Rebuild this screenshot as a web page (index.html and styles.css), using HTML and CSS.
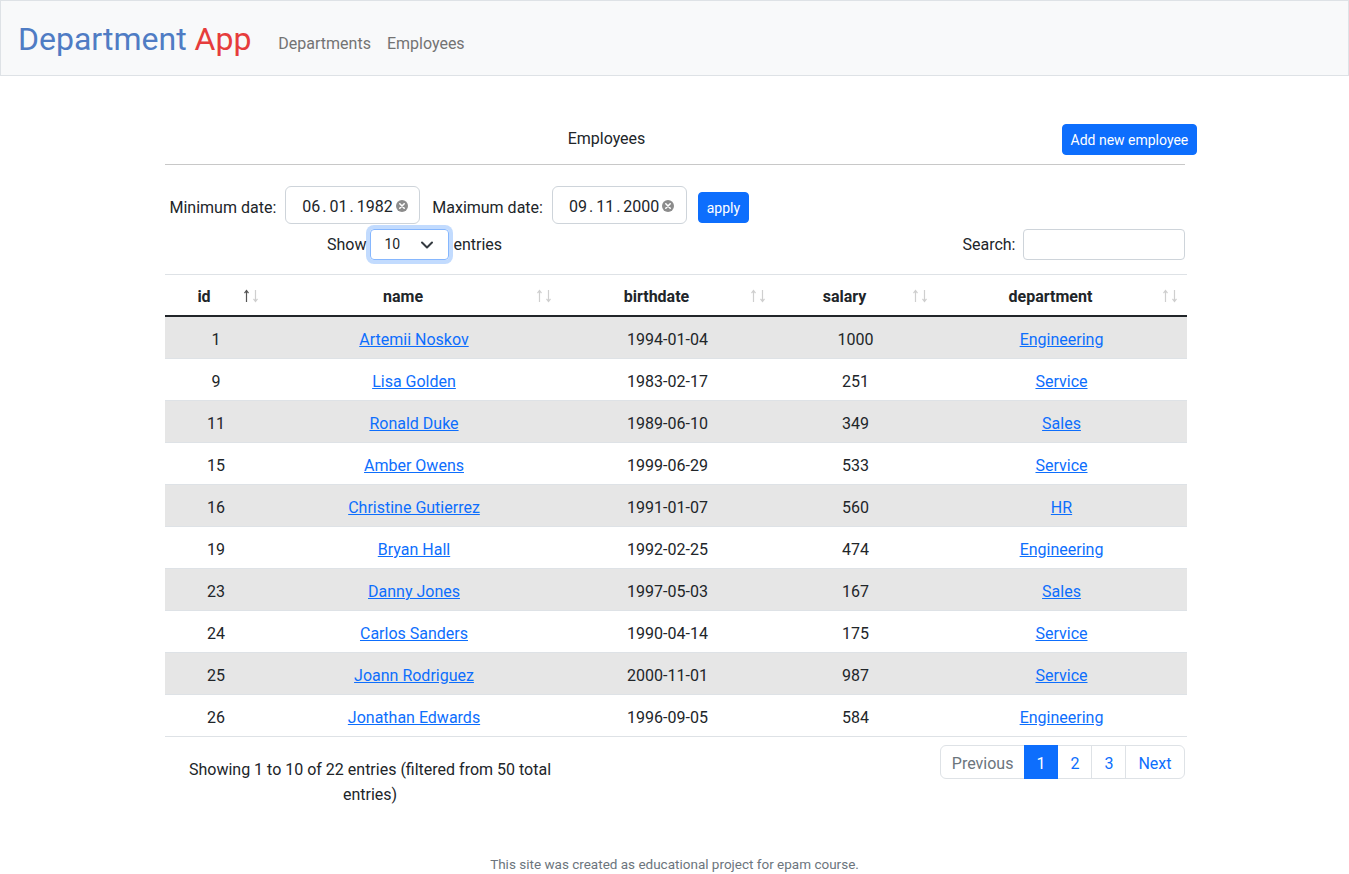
FILE: index.html
```html
<!DOCTYPE html>
<html lang="en">
<head>
<meta charset="utf-8">
<title>Department App</title>
<link rel="stylesheet" href="styles.css">
</head>
<body>
<nav class="navbar">
  <a class="brand" href="#"><span class="brand-blue">Department</span> <span class="brand-red">App</span></a>
  <a class="nav-link" href="#">Departments</a>
  <a class="nav-link" href="#">Employees</a>
</nav>

<main class="container">
  <div class="title-row">
    <h1 class="title">Employees</h1>
    <button class="btn btn-sm btn-add">Add new employee</button>
  </div>
  <hr class="sep">

  <div class="filters">
    <span class="flabel">Minimum date:</span>
    <div class="date-input">
      <span class="date-text">06<span class="dot">.</span>01<span class="dot">.</span>1982</span>
      <svg class="clear" width="12" height="12" viewBox="0 0 12 12"><circle cx="6" cy="6" r="6" fill="#8c8c8c"/><path d="M3.8 3.8L8.2 8.2M8.2 3.8L3.8 8.2" stroke="#fff" stroke-width="1.6" stroke-linecap="round"/></svg>
    </div>
    <span class="flabel flabel-2">Maximum date:</span>
    <div class="date-input">
      <span class="date-text">09<span class="dot">.</span>11<span class="dot">.</span>2000</span>
      <svg class="clear" width="12" height="12" viewBox="0 0 12 12"><circle cx="6" cy="6" r="6" fill="#8c8c8c"/><path d="M3.8 3.8L8.2 8.2M8.2 3.8L3.8 8.2" stroke="#fff" stroke-width="1.6" stroke-linecap="round"/></svg>
    </div>
    <button class="btn btn-sm btn-apply">apply</button>
  </div>

  <div class="dt-top">
    <div class="dt-length">
      <span class="ctl-text">Show</span>
      <div class="select-box">
        <span>10</span>
        <svg width="14" height="10" viewBox="0 0 14 10"><path d="M2 2.5L7 7.5L12 2.5" fill="none" stroke="#343a40" stroke-width="2" stroke-linecap="round" stroke-linejoin="round"/></svg>
      </div>
      <span class="ctl-text">entries</span>
    </div>
    <div class="dt-filter">
      <span class="ctl-text">Search:</span>
      <div class="search-box"></div>
    </div>
  </div>

  <table class="dt-table">
    <colgroup>
      <col class="c-id"><col class="c-name"><col class="c-birth"><col class="c-salary"><col class="c-dept">
    </colgroup>
    <thead>
      <tr>
        <th><div class="th-in"><span class="th-label th-id">id</span><svg class="sort" width="15" height="14" viewBox="0 0 15 14"><path class="up active" d="M2.5 13V1.5M0.5 4.2L2.5 1.5L4.5 4.2"/><path class="down" d="M11.5 1V12.5M9.5 9.8L11.5 12.5L13.5 9.8"/></svg></div></th>
        <th><div class="th-in"><span class="th-label">name</span><svg class="sort" width="15" height="14" viewBox="0 0 15 14"><path class="up" d="M2.5 13V1.5M0.5 4.2L2.5 1.5L4.5 4.2"/><path class="down" d="M11.5 1V12.5M9.5 9.8L11.5 12.5L13.5 9.8"/></svg></div></th>
        <th><div class="th-in"><span class="th-label">birthdate</span><svg class="sort" width="15" height="14" viewBox="0 0 15 14"><path class="up" d="M2.5 13V1.5M0.5 4.2L2.5 1.5L4.5 4.2"/><path class="down" d="M11.5 1V12.5M9.5 9.8L11.5 12.5L13.5 9.8"/></svg></div></th>
        <th><div class="th-in"><span class="th-label">salary</span><svg class="sort" width="15" height="14" viewBox="0 0 15 14"><path class="up" d="M2.5 13V1.5M0.5 4.2L2.5 1.5L4.5 4.2"/><path class="down" d="M11.5 1V12.5M9.5 9.8L11.5 12.5L13.5 9.8"/></svg></div></th>
        <th><div class="th-in"><span class="th-label">department</span><svg class="sort" width="15" height="14" viewBox="0 0 15 14"><path class="up" d="M2.5 13V1.5M0.5 4.2L2.5 1.5L4.5 4.2"/><path class="down" d="M11.5 1V12.5M9.5 9.8L11.5 12.5L13.5 9.8"/></svg></div></th>
      </tr>
    </thead>
    <tbody>
      <tr><td>1</td><td><a href="#">Artemii Noskov</a></td><td>1994-01-04</td><td>1000</td><td><a href="#">Engineering</a></td></tr>
      <tr><td>9</td><td><a href="#">Lisa Golden</a></td><td>1983-02-17</td><td>251</td><td><a href="#">Service</a></td></tr>
      <tr><td>11</td><td><a href="#">Ronald Duke</a></td><td>1989-06-10</td><td>349</td><td><a href="#">Sales</a></td></tr>
      <tr><td>15</td><td><a href="#">Amber Owens</a></td><td>1999-06-29</td><td>533</td><td><a href="#">Service</a></td></tr>
      <tr><td>16</td><td><a href="#">Christine Gutierrez</a></td><td>1991-01-07</td><td>560</td><td><a href="#">HR</a></td></tr>
      <tr><td>19</td><td><a href="#">Bryan Hall</a></td><td>1992-02-25</td><td>474</td><td><a href="#">Engineering</a></td></tr>
      <tr><td>23</td><td><a href="#">Danny Jones</a></td><td>1997-05-03</td><td>167</td><td><a href="#">Sales</a></td></tr>
      <tr><td>24</td><td><a href="#">Carlos Sanders</a></td><td>1990-04-14</td><td>175</td><td><a href="#">Service</a></td></tr>
      <tr><td>25</td><td><a href="#">Joann Rodriguez</a></td><td>2000-11-01</td><td>987</td><td><a href="#">Service</a></td></tr>
      <tr><td>26</td><td><a href="#">Jonathan Edwards</a></td><td>1996-09-05</td><td>584</td><td><a href="#">Engineering</a></td></tr>
    </tbody>
  </table>

  <div class="dt-bottom">
    <div class="dt-info">Showing 1 to 10 of 22 entries (filtered from 50 total entries)</div>
    <ul class="pagination">
      <li class="page disabled"><a href="#">Previous</a></li>
      <li class="page active"><a href="#">1</a></li>
      <li class="page"><a href="#">2</a></li>
      <li class="page"><a href="#">3</a></li>
      <li class="page"><a href="#">Next</a></li>
    </ul>
  </div>
</main>

<footer class="footer">This site was created as educational project for epam course.</footer>
</body>
</html>
```

FILE: styles.css
```css
* { box-sizing: border-box; }

body {
  margin: 0;
  font-family: Roboto, "Noto Sans", sans-serif;
  font-size: 16px;
  line-height: 1.5;
  color: #212529;
  background: #fff;
}

a { color: #0d6efd; }

/* navbar */
.navbar {
  display: flex;
  align-items: center;
  height: 76px;
  padding: 0 16px 0 17px;
  background: #f8f9fa;
  border: 1px solid #dee2e6;
}
.brand {
  font-size: 32px;
  line-height: 1.2;
  text-decoration: none;
  margin-right: 19px;
  margin-top: 2px;
}
.brand-blue { color: #4f7cc4; }
.brand-red { color: #e63c3c; }
.nav-link {
  color: #737373;
  text-decoration: none;
  padding: 0 8px;
  margin-top: 11px;
}

/* container */
.container {
  width: 1020px;
  margin: 0 auto;
  text-align: center;
}

.title-row {
  display: flex;
  align-items: center;
  width: 1032px;
  margin-top: 48px;
  height: 31px;
}
.title {
  width: 884px;
  margin: 0;
  font-size: 16px;
  font-weight: 400;
  line-height: 24px;
  margin-top: -1px;
}
.btn {
  font-family: inherit;
  border: 1px solid #0d6efd;
  background: #0d6efd;
  color: #fff;
  border-radius: 4px;
  cursor: pointer;
}
.btn-sm {
  font-size: 14px;
  line-height: 21px;
  padding: 5px 8px 3px;
}
.btn-add {
  margin-left: auto;
  width: 135px;
  white-space: nowrap;
}

.sep {
  margin: 9px 0 0;
  border: 0;
  border-top: 1px solid #c8c8c8;
}

/* filters */
.filters {
  display: flex;
  align-items: center;
  margin-top: 21px;
  padding-left: 5px;
  height: 38px;
}
.flabel {
  padding-top: 6px;
  margin-right: 9px;
}
.flabel-2 { margin-left: 12px; }
.date-input {
  display: flex;
  align-items: center;
  width: 135px;
  height: 38px;
  padding: 0 14px 0 16px;
  border: 1px solid #ced4da;
  border-radius: 6px;
  color: #212529;
}
.date-text {
  flex: 1;
  text-align: left;
  padding-top: 3px;
  white-space: nowrap;
}
.dot { margin: 0 3px 0 2px; }
.clear { flex: none; margin-top: 1px; margin-left: 3px; }
.btn-apply {
  margin-left: 11px;
  width: 51px;
  margin-top: 4px;
  padding: 5px 0 3px;
}

/* top controls */
.dt-top {
  display: grid;
  grid-template-columns: 1fr 1fr;
  column-gap: 24px;
  margin-top: 5px;
  height: 31px;
}
.dt-length {
  display: flex;
  justify-content: center;
  align-items: center;
  gap: 4px;
  padding-left: 2px;
}
.ctl-text { padding-top: 1px; }
.select-box {
  display: flex;
  align-items: center;
  justify-content: space-between;
  width: 79px;
  height: 31px;
  padding: 0 14px 0 13px;
  border: 1px solid #86b7fe;
  border-radius: 4px;
  box-shadow: 0 0 0 4px rgba(13, 110, 253, 0.25);
  font-size: 14px;
}
.dt-filter {
  display: flex;
  justify-content: flex-end;
  align-items: center;
  gap: 7px;
}
.search-box {
  width: 162px;
  height: 31px;
  border: 1px solid #ced4da;
  border-radius: 4px;
}

/* table */
.dt-table {
  width: 1022px;
  margin-top: 14px;
  border-collapse: collapse;
  border-top: 1px solid #dee2e6;
}
.c-id { width: 103px; }
.c-name { width: 293px; }
.c-birth { width: 214px; }
.c-salary { width: 162px; }
.c-dept { width: 250px; }

.dt-table th {
  padding: 10px 9px 6px 8px;
  font-weight: 700;
  line-height: 24px;
  border-bottom: 2px solid #212529;
}
.th-in {
  display: flex;
  align-items: center;
}
.th-label {
  flex: 1;
  text-align: center;
  padding-right: 6px;
}
.th-id { padding-right: 8px; }
.sort {
  flex: none;
  fill: none;
  stroke-width: 1.2;
  margin-top: -2px;
}
.sort .up, .sort .down { stroke: #cfcfcf; }
.sort .up.active { stroke: #555; }

.dt-table td {
  padding: 11px 8px 6px;
  line-height: 24px;
  text-align: center;
  border-bottom: 1px solid #dee2e6;
}
.dt-table tbody tr:nth-child(odd) td { background: #e6e6e6; }

/* bottom */
.dt-bottom {
  display: grid;
  grid-template-columns: 411px 1fr;
  column-gap: 24px;
  margin-top: 8px;
}
.dt-info {
  padding-top: 12px;
  line-height: 25px;
}
.pagination {
  display: flex;
  justify-content: flex-end;
  list-style: none;
  margin: 0;
  padding: 0;
  height: 34px;
}
.page a {
  display: block;
  padding: 8px 12px 4px;
  line-height: 20px;
  text-decoration: none;
  color: #0d6efd;
  border: 1px solid #dee2e6;
  margin-left: -1px;
}
.page:first-child a { border-radius: 6px 0 0 6px; margin-left: 0; padding: 8px 11px 4px; }
.page.active a { padding: 8px 12px 4px 11px; }
.page:last-child a { border-radius: 0 6px 6px 0; }
.page.disabled a { color: #6c757d; }
.page.active a {
  background: #0d6efd;
  border-color: #0d6efd;
  color: #fff;
  position: relative;
}

.footer {
  margin-top: 47px;
  text-align: center;
  font-size: 13.5px;
  color: #6c757d;
  line-height: 20px;
}
```
